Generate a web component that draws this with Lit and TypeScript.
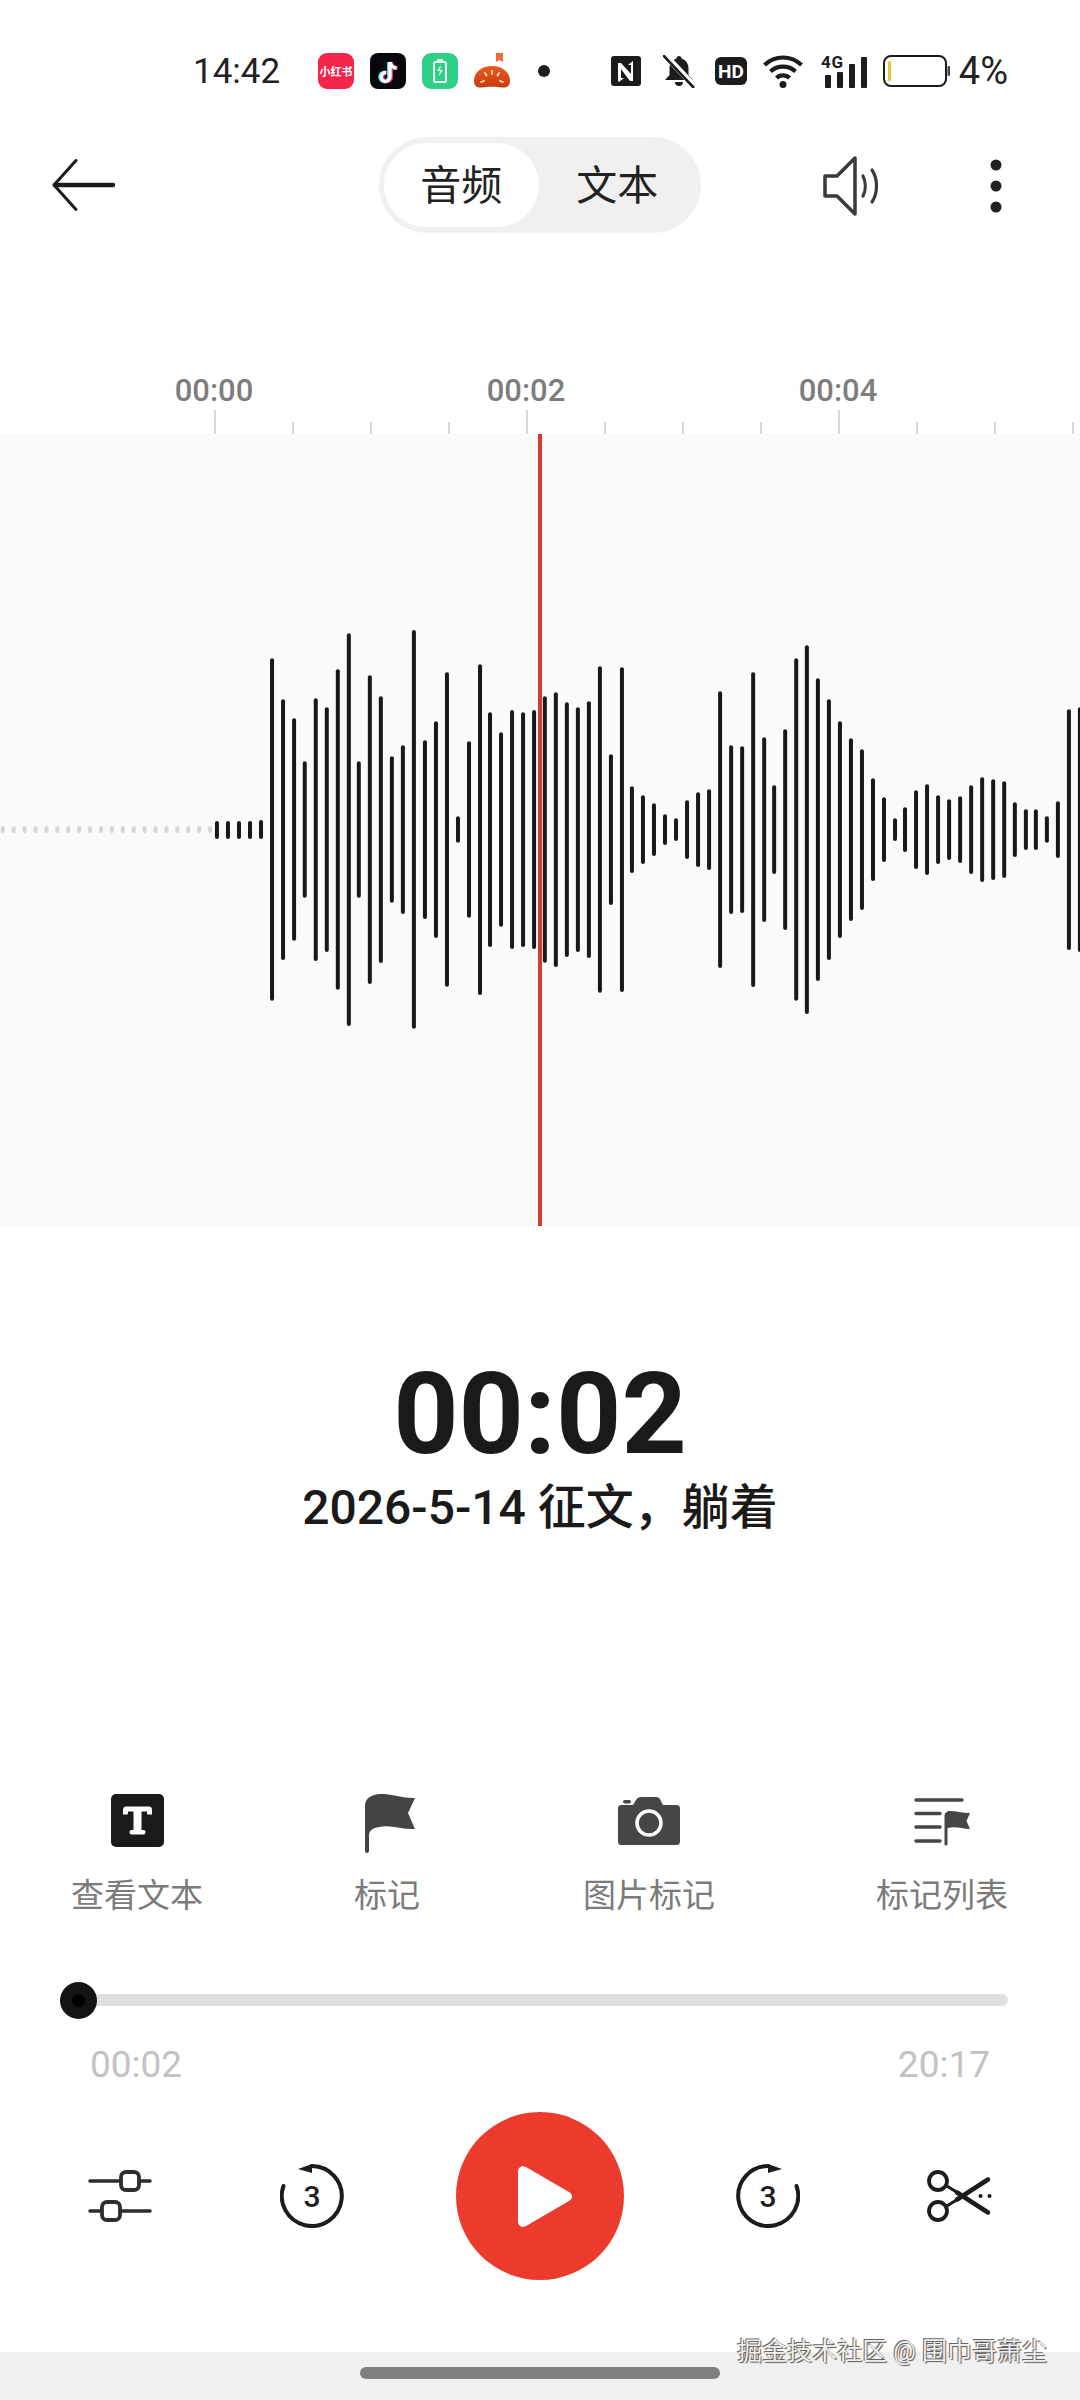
import { LitElement, html, css, svg } from "lit";
import { customElement } from "lit/decorators.js";

// Waveform read off two crops of the band: [x in crop, top in crop, bottom in crop]
const LEFT_BARS = [
  [630, 633, 687], [662, 633, 687], [694, 633, 687], [726, 633, 687], [758, 630, 687],
  [790, 145, 1172], [822, 268, 1050], [854, 325, 992], [885, 454, 863], [917, 265, 1053],
  [949, 292, 1026], [981, 178, 1139], [1013, 70, 1248], [1042, 454, 863], [1074, 196, 1122],
  [1106, 259, 1059], [1138, 439, 878], [1170, 406, 912], [1202, 60, 1256], [1234, 391, 927],
  [1266, 334, 984], [1298, 187, 1130], [1330, 619, 698], [1362, 394, 923], [1394, 163, 1155],
  [1423, 307, 1011], [1455, 367, 950], [1487, 300, 1017], [1519, 307, 1011], [1551, 300, 1017],
];
const RIGHT_BARS = [
  [14, 259, 1058], [46, 247, 1071], [78, 277, 1041], [110, 292, 1026], [142, 274, 1044],
  [174, 169, 1148], [206, 433, 885], [238, 172, 1146], [267, 529, 789], [299, 556, 762],
  [331, 580, 738], [363, 613, 705], [395, 625, 693], [427, 571, 747], [459, 547, 771],
  [491, 538, 780], [523, 244, 1074], [555, 406, 912], [587, 409, 909], [619, 187, 1131],
  [651, 382, 936], [680, 526, 792], [712, 358, 960], [744, 145, 1172], [775, 106, 1212],
  [807, 205, 1113], [839, 268, 1050], [871, 334, 984], [903, 385, 933], [935, 418, 900],
  [967, 505, 813], [999, 562, 756], [1031, 625, 693], [1060, 592, 726], [1092, 541, 777],
  [1124, 523, 795], [1156, 556, 762], [1188, 568, 750], [1220, 559, 759], [1252, 526, 792],
  [1284, 502, 816], [1316, 508, 810], [1348, 514, 804], [1379, 577, 741], [1411, 598, 720],
  [1440, 598, 720], [1472, 619, 698], [1504, 574, 744], [1536, 298, 1020], [1568, 292, 1026],
];
const CROP_X = 2.904;
const toBar = (offset: number) => ([x, t, b]: number[]) => ({
  x: offset + x / CROP_X,
  top: 176 + t / 3,
  h: (b - t) / 3,
});
const BARS = [...LEFT_BARS.map(toBar(0)), ...RIGHT_BARS.map(toBar(540))];
const DOTS = Array.from({ length: 20 }, (_, i) => 2.8 + i * 10.91);

const TICKS = [215, 293, 371, 449, 527, 605, 683, 761, 839, 917, 995, 1073];
const MAJOR = [215, 527, 839];
const LABELS = [
  [214, "00:00"],
  [526, "00:02"],
  [838, "00:04"],
];

@customElement("app-root")
export class AppRoot extends LitElement {
  static styles = css`
    :host {
      display: block;
      width: 1080px;
      height: 2400px;
      background: #fff;
      font-family: Roboto, "Noto Sans CJK SC", sans-serif;
      color: #1a1a1a;
      overflow: hidden;
    }
    svg {
      display: block;
    }
    .page {
      position: relative;
      display: flex;
      flex-direction: column;
      height: 2400px;
    }

    .status {
      height: 142px;
      flex: none;
      display: flex;
      align-items: center;
      padding: 0 72px 0 193px;
      box-sizing: border-box;
    }
    .clock {
      font-size: 35px;
      width: 125px;
      color: #222;
    }
    .apps {
      display: flex;
      align-items: center;
      gap: 16px;
    }
    .app-dot {
      margin-left: 10px;
    }
    .sys {
      display: flex;
      align-items: center;
      margin-left: auto;
      gap: 16px;
    }
    .bell {
      margin-left: 6px;
      margin-right: 4px;
    }
    .wifi {
      margin-right: 2px;
    }
    .sig {
      margin-top: -4px;
    }
    .pct {
      font-size: 38px;
      color: #222;
      margin-left: -7px;
    }

    .nav {
      height: 88px;
      flex: none;
      display: flex;
      align-items: center;
      position: relative;
      padding: 0 78px 0 50px;
    }
    .toggle {
      position: absolute;
      left: 379px;
      top: -5px;
      width: 322px;
      height: 96px;
      background: #f0f0f0;
      border-radius: 48px;
      display: flex;
      align-items: center;
      font-size: 41px;
      box-sizing: border-box;
      padding: 6px 5px;
    }
    .toggle span {
      height: 84px;
      display: flex;
      align-items: center;
      justify-content: center;
      color: #222;
      box-sizing: border-box;
      padding-bottom: 6px;
    }
    .toggle .on {
      width: 157px;
      background: #fff;
      border-radius: 42px;
    }
    .toggle .off {
      width: 160px;
    }
    .nav-right {
      margin-left: auto;
      display: flex;
      align-items: center;
      gap: 108px;
    }

    .ruler {
      flex: none;
    }
    .ruler text {
      font-family: Roboto, sans-serif;
      font-size: 31px;
      font-weight: 500;
      fill: #7d7d7d;
      text-anchor: middle;
    }

    .wave {
      position: relative;
      flex: none;
      height: 792px;
      background: #fafafa;
      overflow: hidden;
    }
    .head {
      position: absolute;
      left: 538px;
      top: 0;
      bottom: 0;
      width: 4px;
      background: #d63a2e;
    }

    .time {
      font-size: 114px;
      font-weight: 700;
      line-height: 134px;
      text-align: center;
      margin-top: 121px;
    }
    .title {
      font-size: 48px;
      font-weight: 500;
      line-height: 64px;
      text-align: center;
      margin-top: -5px;
    }

    .actions {
      margin-top: 254px;
      padding-left: 71px;
      display: grid;
      grid-template-columns: 283px 229px 293px auto;
      justify-items: start;
    }
    .action {
      display: flex;
      flex-direction: column;
      align-items: center;
      gap: 20px;
      font-size: 33px;
      line-height: 44px;
      color: #7b7b7b;
    }
    .flag {
      margin-left: 6px;
    }

    .slider {
      position: relative;
      margin: 76px 72px 0 60px;
      height: 12px;
      background: #e0e0e0;
      border-radius: 6px;
    }
    .knob {
      position: absolute;
      left: 0;
      top: -12px;
      width: 37px;
      height: 37px;
      border-radius: 50%;
      background: #141414;
      display: flex;
      align-items: center;
      justify-content: center;
    }
    .knob i {
      width: 13px;
      height: 13px;
      border-radius: 50%;
      background: #000;
    }
    .times {
      display: flex;
      justify-content: space-between;
      padding: 0 90px;
      margin-top: 37px;
      font-size: 37px;
      line-height: 44px;
      color: #c2c2c2;
    }

    .controls {
      margin-top: 25px;
      height: 168px;
      padding-left: 88px;
      display: flex;
      align-items: center;
      gap: 112px;
    }
    .eq {
      margin-right: 16px;
    }
    .cut {
      margin-left: 15px;
    }
    .play {
      width: 168px;
      height: 168px;
      border-radius: 50%;
      background: #ea3b2c;
      display: flex;
      align-items: center;
      justify-content: center;
    }
    .play svg {
      margin-left: 8px;
    }

    .home {
      margin-top: auto;
      height: 48px;
      background: #eff0f1;
      display: flex;
      justify-content: center;
      padding-top: 15px;
      box-sizing: border-box;
    }
    .home i {
      width: 360px;
      height: 12px;
      border-radius: 6px;
      background: #808080;
    }
    .mark {
      position: absolute;
      right: 33px;
      top: 2332px;
      font-size: 25px;
      line-height: 40px;
      color: #f0f0f0;
      text-shadow: 1px 1px 1px #555, -1px -1px 0 #666;
    }
  `;

  private apps() {
    return html`
      <div class="apps">
        <svg width="36" height="36" viewBox="0 0 36 36">
          <rect width="36" height="36" rx="9" fill="#f5244a"/>
          <text x="18" y="22.500" font-size="11" font-weight="700" fill="#fff" text-anchor="middle" font-family="Noto Sans CJK SC">小红书</text>
        </svg>
        <svg width="36" height="36" viewBox="0 0 36 36">
          <rect width="36" height="36" rx="8" fill="#07070c"/>
          <path d="M20 8v15a4.400 4.400 0 1 1-4-4.400M20 8c.6 3.600 2.800 5.600 6.500 6" fill="none" stroke="#3ce0e6" stroke-width="4" transform="translate(-1 1)"/>
          <path d="M20 8v15a4.400 4.400 0 1 1-4-4.400M20 8c.6 3.600 2.800 5.600 6.500 6" fill="none" stroke="#f0325a" stroke-width="4" transform="translate(1 1)"/>
          <path d="M20 8v15a4.400 4.400 0 1 1-4-4.400M20 8c.6 3.600 2.800 5.600 6.500 6" fill="none" stroke="#fff" stroke-width="3.400" transform="translate(0 1)"/>
        </svg>
        <svg width="36" height="36" viewBox="0 0 36 36">
          <rect width="36" height="36" rx="9" fill="#2fcf87"/>
          <rect x="12" y="9" width="12" height="20" rx="1.500" fill="none" stroke="#e8fff4" stroke-width="2"/>
          <rect x="15" y="6" width="6" height="3" fill="#e8fff4"/>
          <path d="M19 12l-4 6h3l-1 5 4-6h-3z" fill="#e8fff4"/>
        </svg>
        <svg width="38" height="36" viewBox="0 0 38 36">
          <defs>
            <linearGradient id="tomato" x1="0" y1="0" x2="0" y2="1">
              <stop offset="0" stop-color="#ea5a22"/>
              <stop offset="1" stop-color="#c93c10"/>
            </linearGradient>
          </defs>
          <path d="M0 28C0 19 8 13 18 13s18 6 18 15c0 5-3 7-8 6.500-6-1-14-1-20 0C3 35 0 33 0 28z" fill="url(#tomato)"/>
          <path d="M22 0h7v9l-3.500-2L22 9z" fill="#ee6a3a"/>
          <path d="M18 18v3M11 20l1.500 2.500M25 20l-1.500 2.500M7 29l3-1M29 29l-3-1" stroke="#ffe0bc" stroke-width="1.800" stroke-linecap="round"/>
        </svg>
        <svg class="app-dot" width="12" height="12" viewBox="0 0 12 12"><circle cx="6" cy="6" r="6" fill="#1c1c1c"/></svg>
      </div>
    `;
  }

  private sys() {
    return html`
      <div class="sys">
        <svg width="30" height="30" viewBox="0 0 30 30">
          <rect width="30" height="30" rx="3" fill="#1c1c1c"/>
          <path d="M7 25V7h3l10 11V9h-3l5-4v20h-3L10 13v9h3l-5 4z" fill="#fff"/>
        </svg>
        <svg class="bell" width="32" height="33" viewBox="0 0 32 33">
          <path d="M16 1c-1.500 0-2.500 1-2.500 2.500C9 5 6.500 9 6.500 13v7L2 25h28l-4.500-5v-7c0-4-2.500-8-7-9.500C18.500 2 17.500 1 16 1zM12 27a4 4 0 0 0 8 0z" fill="#1c1c1c"/>
          <path d="M2 0l30 32" stroke="#fff" stroke-width="6"/>
          <path d="M0 0l31 33" stroke="#1c1c1c" stroke-width="2.600"/>
        </svg>
        <svg width="32" height="28" viewBox="0 0 32 28">
          <rect width="32" height="28" rx="6" fill="#1c1c1c"/>
          <text x="16" y="21" font-size="19" font-weight="700" fill="#fff" text-anchor="middle" font-family="Roboto">HD</text>
        </svg>
        <svg class="wifi" width="40" height="33" viewBox="0 0 40 33">
          <path d="M1.500 10c10.500-10 26.500-10 37 0M7.500 16.500c7-6.500 18-6.500 25 0M13.500 23c3.500-3.500 9.500-3.500 13 0" fill="none" stroke="#1c1c1c" stroke-width="4.200"/>
          <circle cx="20" cy="29.500" r="3.500" fill="#1c1c1c"/>
        </svg>
        <svg class="sig" width="46" height="37" viewBox="0 -4 46 37">
          <text x="0" y="13" font-size="17" font-weight="700" fill="#1c1c1c" font-family="Roboto" textLength="22">4G</text>
          <rect x="4" y="20" width="6" height="13" rx="1" fill="#1c1c1c"/>
          <rect x="16" y="17" width="6" height="16" rx="1" fill="#1c1c1c"/>
          <rect x="28" y="9" width="6" height="24" rx="1" fill="#1c1c1c"/>
          <rect x="40" y="2" width="6" height="31" rx="1" fill="#1c1c1c"/>
        </svg>
        <svg width="67" height="32" viewBox="0 0 67 32">
          <rect x="1" y="1" width="62" height="30" rx="7" fill="#fff" stroke="#1c1c1c" stroke-width="2"/>
          <rect x="5" y="6" width="3" height="20" rx="1" fill="#e8c440"/>
          <rect x="64.500" y="11" width="2.500" height="10" rx="1" fill="#444"/>
        </svg>
        <span class="pct">4%</span>
      </div>
    `;
  }

  private ruler() {
    return svg`
      ${TICKS.map((x) => {
        const major = MAJOR.includes(x);
        return svg`<rect x=${x - 0.75} y=${major ? 180 : 192} width="1.500" height=${major ? 24 : 12} fill="#cbcbcb"/>`;
      })}
      ${LABELS.map(([x, t]) => svg`<text x=${x} y="171">${t}</text>`)}
    `;
  }

  private wave() {
    return svg`
      ${DOTS.map((x) => svg`<rect x=${x - 2} y="392" width="4" height="7" rx="2" fill="#d6d6d6"/>`)}
      ${BARS.map((b) => svg`<rect x=${b.x - 2} y=${b.top} width="4" height=${b.h} rx="2" fill="#181818"/>`)}
    `;
  }

  render() {
    return html`
      <div class="page">
        <div class="status">
          <span class="clock">14:42</span>
          ${this.apps()}
          ${this.sys()}
        </div>

        <div class="nav">
          <svg width="66" height="54" viewBox="0 0 66 54">
            <path d="M26 1.500L4 26l22 24.500" fill="none" stroke="#1c1c1c" stroke-width="3" stroke-linecap="round" stroke-linejoin="round"/>
            <path d="M5 26h58" fill="none" stroke="#1c1c1c" stroke-width="4.500" stroke-linecap="round"/>
          </svg>
          <div class="toggle">
            <span class="on">音频</span>
            <span class="off">文本</span>
          </div>
          <div class="nav-right">
            <svg width="60" height="60" viewBox="0 0 60 60">
              <path d="M3 20h12L33 2v56L15 40H3z" fill="none" stroke="#3a3a3a" stroke-width="3.500" stroke-linejoin="round"/>
              <path d="M41 20c3 6 3 14 0 20M50 14c6 9 6 23 0 32" fill="none" stroke="#3a3a3a" stroke-width="3.200" stroke-linecap="round"/>
            </svg>
            <svg width="12" height="54" viewBox="0 0 12 54">
              <circle cx="6" cy="6" r="5.500" fill="#222"/>
              <circle cx="6" cy="27" r="5.500" fill="#222"/>
              <circle cx="6" cy="48" r="5.500" fill="#222"/>
            </svg>
          </div>
        </div>

        <svg class="ruler" width="1080" height="204" viewBox="0 0 1080 204">${this.ruler()}</svg>

        <div class="wave">
          <svg width="1080" height="792" viewBox="0 0 1080 792">${this.wave()}</svg>
          <div class="head"></div>
        </div>

        <div class="time">00:02</div>
        <div class="title">2026-5-14 征文&#xFF0C;躺着</div>

        <div class="actions">
          <div class="action">
            <svg width="53" height="60" viewBox="0 0 53 60">
              <rect width="53" height="53" rx="5" fill="#1a1a1a"/>
              <path d="M12 16c0-2 1-3.500 3-3.500h23c2 0 3 1.500 3 3.500v4.500h-3.500c-1 0-1.500-.5-1.500-1.500v-1.500h-5.500v18.500h2c1.200 0 2 .8 2 2s-.8 2.500-2 2.500H20.500c-1.200 0-2-1.300-2-2.500s.8-2 2-2h2V17.500H17V19c0 1-.5 1.500-1.500 1.500H12z" fill="#fff"/>
            </svg>
            查看文本
          </div>
          <div class="action">
            <svg class="flag" width="50" height="60" viewBox="0 0 50 60">
              <path d="M0 12C0 4 6 1 14 0c12-1 24 5 36 4l-7 15 7 16c-12 1-24-5-36-2-6 1-10 3-10 9v15a2 2 0 0 1-4 0z" fill="#444"/>
            </svg>
            标记
          </div>
          <div class="action">
            <svg width="62" height="60" viewBox="0 0 62 60">
              <path d="M4 11h11l3-5c1-2 3-3 5-3h15c2 0 3.500 1 4.500 3l2.500 5h13c3 0 4 1 4 4v32c0 3-1 4-4 4H4c-3 0-4-1-4-4V15c0-3 1-4 4-4z" fill="#464646"/>
              <rect x="5" y="6" width="8" height="3.500" rx="1.750" fill="#464646"/>
              <circle cx="31" cy="29" r="12" fill="none" stroke="#fff" stroke-width="3.500"/>
            </svg>
            图片标记
          </div>
          <div class="action">
            <svg width="56" height="60" viewBox="0 0 56 60">
              <path d="M2 6h46M2 19.500h24M2 33h24M2 47h24" stroke="#464646" stroke-width="3.500" stroke-linecap="round"/>
              <path d="M30.500 50V22c0-3 2.500-5 5.500-5 6 0 12 2 20 2l-3.500 8 3.500 8c-8 0-14-3-22.500-1v16a1.500 1.500 0 0 1-3 0z" fill="#464646"/>
            </svg>
            标记列表
          </div>
        </div>

        <div class="slider"><div class="knob"><i></i></div></div>
        <div class="times"><span>00:02</span><span>20:17</span></div>

        <div class="controls">
          <svg class="eq" width="64" height="52" viewBox="0 0 64 52">
            <path d="M2 11h29M52 11h10M2 41h10M33 41h29" stroke="#2e2e2e" stroke-width="3.500" stroke-linecap="round"/>
            <rect x="33" y="2" width="18" height="18" rx="5" fill="none" stroke="#2e2e2e" stroke-width="3.800"/>
            <rect x="14" y="32" width="18" height="18" rx="5" fill="none" stroke="#2e2e2e" stroke-width="3.800"/>
          </svg>
          <svg width="64" height="64" viewBox="0 0 64 64">
            <path d="M3.500 22A30 30 0 1 0 32 2" fill="none" stroke="#1c1c1c" stroke-width="4" stroke-linecap="round"/>
            <path d="M18 5L32 0v9z" fill="#1c1c1c"/>
            <text x="32" y="43" font-size="30" font-weight="500" fill="#1c1c1c" text-anchor="middle" font-family="Roboto">3</text>
          </svg>
          <div class="play">
            <svg width="56" height="61" viewBox="0 0 56 61">
              <path d="M2 6c0-5 4-7 8-5l43 25c4 2 4 7 0 9L10 60c-4 2-8 0-8-5z" fill="#fff"/>
            </svg>
          </div>
          <svg width="64" height="64" viewBox="0 0 64 64">
            <path d="M60.500 22A30 30 0 1 1 32 2" fill="none" stroke="#1c1c1c" stroke-width="4" stroke-linecap="round"/>
            <path d="M46 5L32 0v9z" fill="#1c1c1c"/>
            <text x="32" y="43" font-size="30" font-weight="500" fill="#1c1c1c" text-anchor="middle" font-family="Roboto">3</text>
          </svg>
          <svg class="cut" width="66" height="52" viewBox="0 0 66 52">
            <circle cx="11" cy="11" r="9" fill="none" stroke="#1c1c1c" stroke-width="3.800"/>
            <circle cx="11" cy="41" r="9" fill="none" stroke="#1c1c1c" stroke-width="3.800"/>
            <path d="M19 15.500L36 26M19 36.500L36 26" stroke="#1c1c1c" stroke-width="3.200"/>
            <path d="M30 29.500L61 9.500M30 22.500L61 42.500" stroke="#1c1c1c" stroke-width="4.500" stroke-linecap="round"/>
            <circle cx="53.500" cy="26" r="2" fill="#1c1c1c"/>
            <circle cx="62.500" cy="26" r="2" fill="#1c1c1c"/>
          </svg>
        </div>

        <div class="home"><i></i></div>
        <div class="mark">掘金技术社区 @ 围巾哥萧尘</div>
      </div>
    `;
  }
}
